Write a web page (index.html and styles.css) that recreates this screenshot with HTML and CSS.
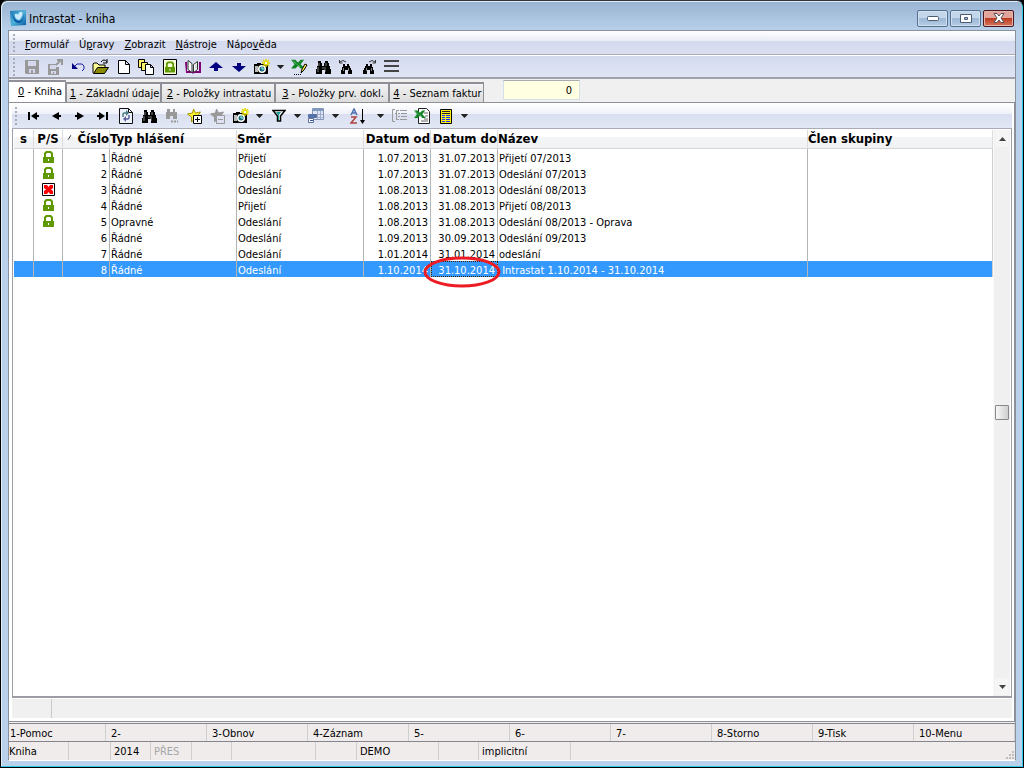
FILE: index.html
```html
<!DOCTYPE html>
<html lang="cs">
<head>
<meta charset="utf-8">
<title>Intrastat - kniha</title>
<link rel="stylesheet" href="styles.css">
</head>
<body>
<svg class="symbols" aria-hidden="true">
  <symbol id="down" viewBox="0 0 8 5"><path d="M0 0h8v1L4 5 0 1z" fill="#222"/></symbol>
  <symbol id="lock" viewBox="0 0 11 12"><path d="M1 6V2l2-2h5l2 2v4h1v6H0V6zm2 0h5V3L7 2H4L3 3z" fill="#609800" fill-rule="evenodd"/><path d="M5 8h1v2H5z" fill="#fff"/></symbol>
  <symbol id="binoculars" viewBox="0 0 16 16"><path d="M3 2h3v2h1v3h2V4h1V2h3v2h1v3h1v3h1v5h-6v-4H7v4H1v-5h1V7h1z"/><path d="M4 4v3M3 8v5M8 8v2M11 4v3M10 8v5" stroke="#fff" stroke-width=".5"/></symbol>
  <symbol id="finder" viewBox="0 0 16 16"><path d="M5 5h2v2h2V5h2v2h1v2h1v2h1v4h-4v-4H7v4H3v-4h1V8h1z"/><path d="M5.500 9v3M10.500 9v3" stroke="#fff" stroke-width=".5"/><path d="M2 3q3-3 6 0M1.500 1v3h3" fill="none" stroke="#333"/></symbol>
  <symbol id="camera" viewBox="0 0 17 16"><path d="M1 5h3V4h4v1h7v10H1z"/><path d="M2 7h3v6H2z" fill="#bbb"/><circle cx="9" cy="10" r="4" fill="#fff"/><circle cx="9" cy="10" r="2.500" fill="#176d76"/><path d="M8 9h2v2" fill="none" stroke="#a8ffff"/><path d="M13 0v8M9 4h8M10 1l6 6M16 1l-6 6" stroke="#e3d900" stroke-width="1.500"/><path d="M12 3h2v2h-2z" fill="#fff"/></symbol>
  <symbol id="excel" viewBox="0 0 16 16"><path d="M0 2h5l3 3 3-3h4l-4 5 5 5h-5l-3-3-3 3H0l4-5z" fill="#128526"/><path d="M2 3l9 8" stroke="#b7e0b7" stroke-dasharray="1 1"/></symbol>
  <symbol id="star" viewBox="0 0 16 16"><path d="M7 1l2 4 5-1-3 4 2 4-5-1-3 3V9L1 6l5-1z"/></symbol>
</svg>

<div class="window">
  <header class="titlebar">
    <svg class="app-icon" viewBox="0 0 16 16"><defs><linearGradient id="blue" x2="1" y2="1"><stop stop-color="#1b79b2"/><stop offset=".5" stop-color="#4eb2da"/><stop offset="1" stop-color="#0758a0"/></linearGradient></defs><path fill="url(#blue)" d="M0 1L16 0v15L1 16z"/><path d="M2 3q1 10 7 10 6-2 4-10 1 8-4 8Q4 10 2 3" fill="#0755a0"/><path d="M5 4q2-1 3 1 1-4 4-3 2 3-3 8Q4 8 5 4" fill="#c9eafa"/></svg>
    <h1 class="title">Intrastat - kniha</h1>
    <div class="window-buttons">
      <button class="win-btn" aria-label="Minimalizovat"><svg width="12" height="5"><rect x=".5" y=".5" width="11" height="4" rx="1" fill="#fff" stroke="#4c5b70"/></svg></button>
      <button class="win-btn" aria-label="Maximalizovat"><svg width="12" height="9"><path d="M.5.5h11v8H.5zM4.500 3.500h3v2h-3z" fill="#fff" stroke="#4c5b70" fill-rule="evenodd"/></svg></button>
      <button class="win-btn win-close" aria-label="Zavřít"><svg width="12" height="10" viewBox="0 0 12 10"><path d="M1 .5h3L6 3 8 .5h3L8 5l3 4.500H8L6 7 4 9.500H1L4 5z" fill="#fff" stroke="#54505c"/></svg></button>
    </div>
  </header>

  <div class="client">
    <div class="bars">
      <nav class="menubar">
        <span class="grip"></span>
        <button class="menu"><u>F</u>ormulář</button>
        <button class="menu">Ú<u>p</u>ravy</button>
        <button class="menu"><u>Z</u>obrazit</button>
        <button class="menu"><u>N</u>ástroje</button>
        <button class="menu">Nápo<u>v</u>ěda</button>
      </nav>
      <div class="toolbar">
        <span class="grip"></span>
        <button class="tool" aria-label="Uložit"><svg width="16" height="16"><path d="M1 1h14v14H2l-1-1z" fill="#999"/><path d="M4 2h8v5H4zM5 10h6v4H9v-3H7v3H5z" fill="#d4d9ee"/></svg></button>
        <button class="tool" aria-label="Uložit a zavřít"><svg width="16" height="16"><path d="M1 5h8v3h3v8H1z" fill="#999"/><path d="M3 6h6v4H3zM4 12h5v3H7v-2H6v2H4z" fill="#d4d9ee"/><path d="M9 6l5-5M10 1h5v5" stroke="#999" stroke-width="2" fill="none"/></svg></button>
        <button class="tool" aria-label="Zpět"><svg width="16" height="16"><path d="M4 8l3-3h5l2 2v3l-2 2" fill="none" stroke="#1820a0"/><path d="M2 4v6h6z" fill="#000080"/></svg></button>
        <button class="tool" aria-label="Otevřít"><svg width="18" height="16"><path d="M1 14V5l1-1h3l2 2h6v3" fill="#fffb93" stroke="#000"/><path d="M1.500 14.500l4-6h11l-4 6z" fill="#8b8900" stroke="#000"/><path d="M9 3q3-4 6 0m0-3v4h-4" fill="none" stroke="#000"/></svg></button>
        <button class="tool" aria-label="Nový"><svg width="16" height="16"><path d="M2.500 1.500h7l4 4v9h-11zM9.500 1.500v4h4" fill="#fff" stroke="#000"/></svg></button>
        <button class="tool" aria-label="Kopie"><svg width="17" height="16"><path d="M.5.500h6v8h-6z" fill="#fff36a" stroke="#000"/><path d="M3.500 3.500h6v8h-6z" fill="#fff36a" stroke="#000"/><path d="M7.500 5.500h5l3 3v7h-8zM12.500 5.500v3h3" fill="#fff" stroke="#000"/></svg></button>
        <button class="tool" aria-label="Zamknout"><svg width="16" height="16"><path d="M1.500.500h13v15h-13z" fill="#f8ffd9" stroke="#000"/><use href="#lock" x="3" y="2" width="10" height="12"/></svg></button>
        <button class="tool" aria-label="Kniha"><svg width="16" height="16"><path d="M0 3h2v9h5l1 1 1-1h5V3h2v11H9l-1 1-1-1H1z" fill="#810075"/><path d="M3 1.500l4 3v9l-4-3zM8.500 5.500l4-3v8l-4 3z" fill="#fff" stroke="#333"/><path d="M10 6l2-2v5l-2 2" fill="#ddd"/></svg></button>
        <button class="tool" aria-label="Předchozí"><svg width="14" height="10"><path d="M7 0l7 6H9v3H5V6H0z" fill="#000080"/></svg></button>
        <button class="tool" aria-label="Další"><svg width="14" height="10"><path d="M5 1h4v3h5L7 10 0 4h5z" fill="#000080"/></svg></button>
        <button class="tool" aria-label="Snímek"><svg width="17" height="16"><use href="#camera"/></svg></button>
        <button class="drop" aria-label="Možnosti snímku"><svg width="7" height="4"><use href="#down"/></svg></button>
        <button class="tool" aria-label="Excel"><svg width="17" height="18"><use href="#excel" y="-1" width="14" height="16"/><path d="M3 16.500h8" stroke="#000" stroke-dasharray="1 1"/><path d="M10 15l1-4 3-5 2 1-3 5z" fill="#ffef4c" stroke="#000"/></svg></button>
        <button class="tool" aria-label="Najít"><svg width="16" height="16"><use href="#binoculars"/></svg></button>
        <button class="tool" aria-label="Najít předchozí"><svg width="16" height="16"><use href="#finder"/></svg></button>
        <button class="tool" aria-label="Najít další"><svg width="16" height="16"><use href="#finder" transform="matrix(-1 0 0 1 16 0)"/></svg></button>
        <button class="tool" aria-label="Seznam"><svg width="15" height="13"><path d="M0 1h15M0 6h15M0 11h15" stroke="#444" stroke-width="2"/></svg></button>
      </div>
    </div>

    <div class="tabs">
      <button class="tab tab-active"><span><u>0</u> - Kniha</span></button>
      <button class="tab tab-short"><span><u>1</u> - Základní údaje</span></button>
      <button class="tab tab-long"><span><u>2</u> - Položky intrastatu</span></button>
      <button class="tab tab-long"><span><u>3</u> - Položky prv. dokl.</span></button>
      <button class="tab tab-short"><span><u>4</u> - Seznam faktur</span></button>
      <input class="counter" type="text" value="0" aria-label="Počet">
    </div>

    <main class="page">
      <div class="toolbar toolbar-list">
        <span class="grip"></span>
        <button class="tool" aria-label="První"><svg width="11" height="8"><path d="M0 0h2v8H0zM3 4l6-4v3h2v2H9v3z"/></svg></button>
        <button class="tool" aria-label="Předchozí záznam"><svg width="9" height="8"><path d="M0 4l7-4v3h2v2H7v3z"/></svg></button>
        <button class="tool" aria-label="Další záznam"><svg width="9" height="8"><path d="M9 4L2 0v3H0v2h2v3z"/></svg></button>
        <button class="tool" aria-label="Poslední"><svg width="11" height="8"><path d="M9 0h2v8H9zM8 4L2 0v3H0v2h2v3z"/></svg></button>
        <button class="tool" aria-label="Obnovit"><svg width="14" height="16"><path d="M.5.500h9l4 4v11H.5zM9.500.500v4h4" fill="#eef2fa" stroke="#111"/><path d="M4 9V6l1-1h2" fill="none" stroke="#477b80" stroke-width="1.500"/><path d="M7 2l3 3-3 3z" fill="#477b80"/><path d="M10 7v3l-1 1H7" fill="none" stroke="#5b62a0" stroke-width="1.500"/><path d="M7 8l-3 3 3 3z" fill="#5b62a0"/></svg></button>
        <button class="tool" aria-label="Hledat"><svg width="16" height="16"><use href="#binoculars"/></svg></button>
        <button class="tool" aria-label="Hledat dále"><svg width="14" height="16"><path d="M2 1h3v3h3V1h2v3h2v7H8V8H5v3H1V4h1z" fill="#999"/><path d="M6 13.500h7" stroke="#999" stroke-width="2" stroke-dasharray="2 1"/></svg></button>
        <button class="tool" aria-label="Přidat záložku"><svg width="17" height="16"><g fill="#ffef3d" stroke="#a29600"><use href="#star"/></g><path d="M7.500 7.500h8v8h-8z" fill="#fff" stroke="#000"/><path d="M9 11.500h5M11.500 9v5" stroke="#000"/></svg></button>
        <button class="tool" aria-label="Odebrat záložku"><svg width="17" height="16"><g fill="#999" stroke="#999"><use href="#star"/></g><path d="M7.500 7.500h8v8h-8z" fill="#dde1f2" stroke="#999"/><path d="M9 11.500h5" stroke="#999"/></svg></button>
        <button class="tool" aria-label="Snímek seznamu"><svg width="17" height="16"><use href="#camera"/></svg></button>
        <button class="drop" aria-label="Možnosti snímku seznamu"><svg width="7" height="4"><use href="#down"/></svg></button>
        <button class="tool" aria-label="Filtr"><svg width="14" height="14"><path d="M1 1.500h12L8.500 7v5h-3V7z" fill="#fff" stroke="#000" stroke-width="1.500"/><path d="M4 3h5L7 6v5H6V6z" fill="#1c9b9b"/></svg></button>
        <button class="drop" aria-label="Možnosti filtru"><svg width="7" height="4"><use href="#down"/></svg></button>
        <button class="tool" aria-label="Okna"><svg width="17" height="16"><path d="M4.500.500h11v11h-11z" fill="#dfe5f5" stroke="#8593b4"/><path d="M5 1h10v2H5z" fill="#7d9ac2"/><path d="M5 6.500h10M5 9.500h10M9.500 3v8M12.500 3v8" stroke="#a1aecb"/><path d="M.5 6.500h8v3h-8zM.5 10.500h5v4h-5z" fill="#fff" stroke="#5d719c"/><path d="M1 7h7v2H1z" fill="#4c74b0"/><path d="M2 12.500h3" stroke="#315ca0"/></svg></button>
        <button class="drop" aria-label="Možnosti oken"><svg width="7" height="4"><use href="#down"/></svg></button>
        <button class="tool tool-sort" aria-label="Seřadit"><svg width="16" height="16"><path d="M1 7l3-6 3 6M2 5h4" fill="none" stroke="#4b70ae" stroke-width="1.500"/><path d="M1 9h5l-5 6h6" fill="none" stroke="#ad4140" stroke-width="1.500"/><path d="M12 1h1v11h2l-2.500 4L10 12h2z"/></svg></button>
        <button class="drop" aria-label="Možnosti řazení"><svg width="7" height="4"><use href="#down"/></svg></button>
        <button class="tool" aria-label="Skupiny"><svg width="17" height="14"><path d="M4 .5H1.500v12H4M8 1.500H5.500v3H4M5.500 4v6M5 10.500h3M9 1.500h7M7 4.500h2M10 4.500h6M7 7.500h2M10 7.500h6M9 10.500h7" fill="none" stroke="#999"/></svg></button>
        <button class="tool" aria-label="Export do Excelu"><svg width="17" height="16"><path d="M4.500.500h8l3 3v12h-11z" fill="#fff" stroke="#222"/><path d="M10 5h4M11 8h3M10 11h4M7 13h7" stroke="#666"/><use href="#excel" y="1" width="12" height="12"/></svg></button>
        <button class="tool" aria-label="Sloupce"><svg width="12" height="15"><path d="M.5.500h11v14H.5z" fill="#ffef16" stroke="#000"/><path d="M2 2.500h8M2 4.500h8" stroke="#222"/><path d="M2 6.500h3M6 6.500h4M2 8.500h3M6 8.500h4M2 10.500h3M6 10.500h4M2 12.500h3M6 12.500h4" stroke="#1232ff"/></svg></button>
        <button class="drop" aria-label="Možnosti sloupců"><svg width="7" height="4"><use href="#down"/></svg></button>
      </div>

      <div class="grid-area">
        <div class="grid-content">
          <table class="grid">
            <colgroup><col class="c-s"><col class="c-ps"><col class="c-num"><col class="c-text"><col class="c-text"><col class="c-date"><col class="c-date"><col><col class="c-member"></colgroup>
            <thead><tr><th class="mid">s</th><th class="mid">P/S</th><th class="right"><svg class="sort-mark" width="8" height="7"><path d="M1 6l3-5" stroke="#333"/><path d="M4 1l3 5H1" fill="none" stroke="#eee"/></svg>Číslo</th><th>Typ hlášení</th><th>Směr</th><th class="right">Datum od</th><th class="right">Datum do</th><th>Název</th><th>Člen skupiny</th></tr></thead>
            <tbody>
              <tr><td></td><td class="mid"><svg width="11" height="12"><use href="#lock"/></svg></td><td class="right">1</td><td>Řádné</td><td>Přijetí</td><td class="right">1.07.2013</td><td class="right">31.07.2013</td><td>Přijetí 07/2013</td><td></td></tr>
              <tr><td></td><td class="mid"><svg width="11" height="12"><use href="#lock"/></svg></td><td class="right">2</td><td>Řádné</td><td>Odeslání</td><td class="right">1.07.2013</td><td class="right">31.07.2013</td><td>Odeslání 07/2013</td><td></td></tr>
              <tr><td></td><td class="mid"><svg width="13" height="13"><path d="M.5.500h12v12H.5z" fill="#fff" stroke="#000"/><path d="M2 2h3l1.500 2L8 2h3v3L9 6.500 11 8v3H8L6.500 9 5 11H2V8l2-1.500L2 5z" fill="#f00"/></svg></td><td class="right">3</td><td>Řádné</td><td>Odeslání</td><td class="right">1.08.2013</td><td class="right">31.08.2013</td><td>Odeslání 08/2013</td><td></td></tr>
              <tr><td></td><td class="mid"><svg width="11" height="12"><use href="#lock"/></svg></td><td class="right">4</td><td>Řádné</td><td>Přijetí</td><td class="right">1.08.2013</td><td class="right">31.08.2013</td><td>Přijetí 08/2013</td><td></td></tr>
              <tr><td></td><td class="mid"><svg width="11" height="12"><use href="#lock"/></svg></td><td class="right">5</td><td>Opravné</td><td>Odeslání</td><td class="right">1.08.2013</td><td class="right">31.08.2013</td><td>Odeslání 08/2013 - Oprava</td><td></td></tr>
              <tr><td></td><td></td><td class="right">6</td><td>Řádné</td><td>Odeslání</td><td class="right">1.09.2013</td><td class="right">30.09.2013</td><td>Odeslání 09/2013</td><td></td></tr>
              <tr><td></td><td></td><td class="right">7</td><td>Řádné</td><td>Odeslání</td><td class="right">1.01.2014</td><td class="right">31.01.2014</td><td>odeslání</td><td></td></tr>
              <tr class="selected"><td></td><td></td><td class="right">8</td><td>Řádné</td><td>Odeslání</td><td class="right">1.10.2014</td><td class="right focused">31.10.2014<svg class="ring" width="78" height="32"><ellipse cx="39" cy="16" rx="37" ry="14" fill="none" stroke="#ed1c24" stroke-width="3"/></svg></td><td>&nbsp;Intrastat 1.10.2014 - 31.10.2014</td><td></td></tr>
            </tbody>
          </table>
        </div>
        <div class="scrollbar">
          <button class="scroll-btn" aria-label="Nahoru"><svg width="7" height="4"><path d="M0 4l3.500-4L7 4z" fill="#444"/></svg></button>
          <div class="thumb"></div>
          <button class="scroll-btn" aria-label="Dolů"><svg width="7" height="4"><path d="M0 0h7L3.500 4z" fill="#444"/></svg></button>
        </div>
      </div>
      <div class="grid-footer"><span class="footer-cell"></span></div>
    </main>

    <div class="keys">
      <button class="key">1-Pomoc</button><button class="key">2-</button><button class="key">3-Obnov</button><button class="key">4-Záznam</button><button class="key">5-</button><button class="key">6-</button><button class="key">7-</button><button class="key">8-Storno</button><button class="key">9-Tisk</button><button class="key">10-Menu</button>
    </div>
    <footer class="status">
      <span>Kniha</span><span></span><span>2014</span><span class="disabled">PŘES</span><span></span><span></span><span></span><span>DEMO</span><span></span><span>implicitní</span><span class="last"><svg width="10" height="10"><path d="M7 1h2v2H7zM4 4h2v2H4zM7 4h2v2H7zM1 7h2v2H1zM4 7h2v2H4zM7 7h2v2H7z" fill="#c1bdbd"/></svg></span>
    </footer>
  </div>
</div>
</body>
</html>
```

FILE: styles.css
```css
* { box-sizing: border-box; }
body {
  margin: 0;
  background: #000;
  color: #000;
  font: 11px/14px "DejaVu Sans Condensed", "DejaVu Sans", sans-serif;
}
button, input { margin: 0; padding: 0; border: 0; background: none; font: inherit; color: inherit; }
svg { display: block; flex: none; }
.symbols { position: absolute; width: 0; height: 0; }

.window {
  display: flex;
  flex-direction: column;
  height: 100vh;
  padding: 0 7px 6px;
  border: 1px solid #000;
  border-top-color: #30343a;
  border-radius: 7px 7px 0 0;
  background: linear-gradient(#98b3d1, #b9d1ea 30px, #b9d1ea);
  box-shadow: inset -1px -1px #2cc9ea, inset 1px 1px #e1edf8;
}
.titlebar { display: flex; align-items: center; height: 29px; padding: 5px 2px 0 2px; flex: none; }
.app-icon { width: 16px; height: 16px; }
.title { flex: 1; margin: 0; padding: 2px 0 0 3px; font-size: 12px; line-height: 14px; font-weight: normal; }
.window-buttons { display: flex; gap: 2px; }
.win-btn {
  display: grid;
  place-items: center;
  width: 31px;
  height: 17px;
  border: 1px solid #536f91;
  border-radius: 2px;
  background: linear-gradient(#c4d6e9 50%, #9cb8d6 50%, #b6cde6);
  box-shadow: inset 0 0 0 1px #d2e1f0;
}
.win-close { border-color: #4b1620; background: linear-gradient(#e2a59b 50%, #bd3b22 50%, #d4765e); box-shadow: inset 0 0 0 1px #e8b3a9; }

.client { display: flex; flex-direction: column; flex: 1; min-height: 0; border: 1px solid #8a919c; border-bottom-color: #fff; background: #f0f0f0; }
.bars { flex: none; border-bottom: 2px solid #a0a2ad; }
.menubar { display: flex; align-items: center; height: 24px; padding-left: 4px; border-bottom: 1px solid #a9acb5; background: linear-gradient(#fff, #e8ecf6 10px, #d4daee 10px, #d9def0); }
.menu { padding: 4px 5px 0; white-space: nowrap; }
.grip { width: 3px; height: 18px; flex: none; margin-right: 4px; background: radial-gradient(circle at 1px 1px, #a9adbb 1px, transparent 1px) 0 0 / 3px 4px; }
.toolbar { display: flex; align-items: center; height: 22px; padding-left: 4px; border-top: 1px solid #fff; background: linear-gradient(#d4daee, #e0e5f5); }
.tool { display: grid; place-items: center; width: 23px; height: 21px; flex: none; }
.drop { display: grid; place-items: center; width: 15px; height: 21px; flex: none; }
.tool-sort { width: 30px; }

.tabs { display: flex; align-items: flex-end; height: 23px; flex: none; }
.tab { height: 20px; padding-top: 2px; border: 1px solid #8f8f98; border-width: 2px 1px 0; background: linear-gradient(#f3f3f3, #dcdcdc); white-space: nowrap; }
.tab-active { width: 57px; height: 22px; padding: 0 0 0 6px; border-left: 0; background: #fff; }
.tab-short { width: 95px; padding-left: 2px; }
.tab-long { width: 114px; padding-left: 2px; }
.counter { width: 77px; height: 20px; margin: 0 0 2px 19px; padding-right: 7px; border: 1px solid #d5dfe8; border-top-color: #a9adb3; background: #ffffe1; text-align: right; }

.page { display: flex; flex-direction: column; flex: 1; min-height: 0; padding: 1px 2px 3px 3px; border: 1px solid #8f8f98; border-left: 0; background: #fff; }
.toolbar-list { flex: none; height: 25px; padding-left: 3px; border-top: 0; border-bottom: 1px solid #a9acb5; background: linear-gradient(#fff, #eef1f9 10px, #d9dff0 10px, #e3e8f6); }
.grid-area { display: flex; flex: 1; min-height: 0; border: 1px solid #9d9da6; border-top: 0; border-bottom-width: 2px; padding: 1px 1px 0; }
.grid-content { flex: 1; min-width: 0; }
.grid { width: 100%; table-layout: fixed; border-collapse: separate; border-spacing: 0; }
.c-s { width: 20px; }
.c-ps { width: 29px; }
.c-num { width: 47px; }
.c-text { width: 127px; }
.c-date { width: 67px; }
.c-member { width: 185px; }
.grid th { height: 19px; padding: 0; border-right: 1px solid #dcdcdf; border-bottom: 1px solid #d5d5d5; background: linear-gradient(#fff 40%, #f4f5f7 40%, #f1f2f4); font-size: 13px; line-height: 18px; text-align: left; white-space: nowrap; }
.grid td { height: 16px; padding: 3px 2px 0 1px; border-right: 1px solid #b4b4b4; line-height: 13px; white-space: nowrap; }
.grid td:last-child { border-right-color: #d0d0d0; }
.grid .right { text-align: right; }
.grid .mid { text-align: center; }
.grid td.mid { padding: 2px 0 0; vertical-align: top; }
.grid .mid svg { margin: 0 auto; }
.sort-mark { display: inline-block; margin-right: 2px; vertical-align: 2px; }
.selected { background: #39f; color: #fff; }
.grid .focused { position: relative; outline: 1px dotted #3a2200; outline-offset: -1px; }
.ring { position: absolute; left: -8px; top: -5px; z-index: 1; }
.scrollbar { display: flex; flex-direction: column; justify-content: space-between; width: 17px; padding: 0 1px 1px; background: #f0f0f0; border-left: 1px solid #fafafa; }
.scroll-btn { display: grid; place-items: center; height: 17px; background: #f5f5f5; }
.thumb { height: 15px; border: 1px solid #888; border-radius: 1px; background: linear-gradient(90deg, #f7f7f7, #cfcfd1); }
.grid-footer { display: flex; height: 19px; flex: none; margin-top: 1px; background: #f0f0f0; }
.footer-cell { width: 40px; border-right: 1px solid #c9c9c9; }

.keys { display: flex; flex: none; height: 18px; margin-top: 1px; border-top: 1px solid #85858e; background: #f0ecec; }
.key { flex: 1; padding: 3px 0 0 5px; border-right: 1px solid #cfcfcf; text-align: left; white-space: nowrap; }
.key:first-child { padding-left: 1px; }
.status { display: grid; grid-template-columns: 60px 42px 40px 41px 40px 84px 41px 82px 40px 92px 1fr; flex: none; height: 19px; border-top: 1px solid #85858e; background: #f0ecec; }
.status span { padding: 3px 0 0 3px; border-right: 1px solid #cfcfcf; white-space: nowrap; }
.status span:first-child { padding-left: 0; }
.status .disabled { color: #a6a6a6; }
.status .last { display: flex; align-items: flex-end; justify-content: flex-end; border: 0; }
```
